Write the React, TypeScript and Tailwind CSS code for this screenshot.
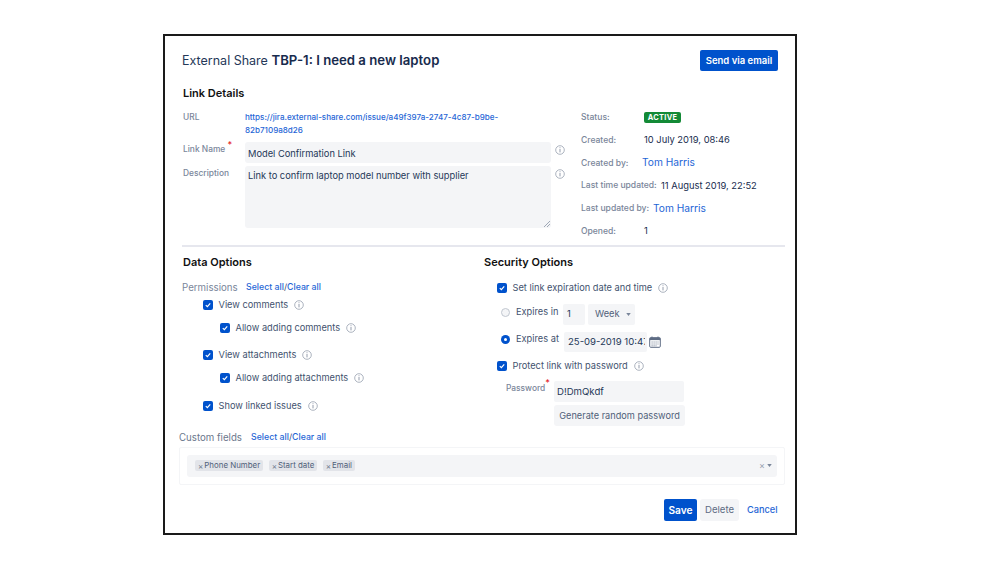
import React from "react";

function Info({ className = "" }: { className?: string }) {
  return (
    <svg viewBox="0 0 10 10" className={`w-[10px] h-[10px] shrink-0 ${className}`} fill="none">
      <circle cx="5" cy="5" r="4.3" stroke="#97a0af" strokeWidth="0.8" />
      <rect x="4.6" y="2.3" width="0.8" height="0.9" fill="#7a869a" />
      <rect x="4.6" y="4" width="0.8" height="3.4" fill="#7a869a" />
    </svg>
  );
}

function Check({ className = "" }: { className?: string }) {
  return (
    <span className={`w-[10px] h-[10px] shrink-0 rounded-[2px] bg-[#0052cc] flex items-center justify-center ${className}`}>
      <svg viewBox="0 0 10 10" className="w-[8px] h-[8px]" fill="none">
        <path d="M2.2 5.2 L4.2 7 L7.8 3" stroke="#fff" strokeWidth="1.5" />
      </svg>
    </span>
  );
}

function Row({ label, margin, indent }: { label: string; margin: string; indent: string }) {
  return (
    <div className={`flex items-center h-4 ${margin} ${indent}`}>
      <Check />
      <span className="ml-[5.5px] pt-[1px] text-[9.25px] text-[#42526e]">{label}</span>
      <Info className="ml-[6px]" />
    </div>
  );
}

function Links() {
  return (
    <span className="text-[8.75px] font-medium text-[#1f66d6]">
      Select all<span className="text-[#42526e] font-normal">/</span>Clear all
    </span>
  );
}

function Tag({ label }: { label: string }) {
  return (
    <span className="h-[11px] pl-[3px] pr-[3px] flex items-center gap-[1px] rounded-[2px] bg-[#e2e4e9] text-[7.9px] text-[#505f79]">
      <span className="text-[8px] text-[#6b778c]">×</span>
      {label}
    </span>
  );
}

function Meta({ label, labelClass, children }: { label: string; labelClass: string; children: React.ReactNode }) {
  return (
    <div className="h-[22.8px] flex items-center">
      <span className={`text-[8.55px] font-medium text-[#7a869a] shrink-0 ${labelClass}`}>{label}</span>
      {children}
    </div>
  );
}

export default function App() {
  return (
    <div className="w-[999px] h-[574px] bg-white pt-[34px] pl-[163px] font-['Inter',sans-serif] overflow-hidden">
      <div className="w-[634px] h-[501px] border-2 border-[#1a1a1a] px-[17px]">
        <div className="flex justify-between items-center pt-[14px]">
          <h1 className="text-[12.5px] text-[#253858]">
            External Share <span className="text-[13.2px] font-semibold text-[#172b4d]">TBP-1: I need a new laptop</span>
          </h1>
          <button className="w-[78px] h-[21px] rounded-[2px] bg-[#0052cc] pt-[1px] text-white text-[9.5px] font-semibold">Send via email</button>
        </div>

        <h2 className="mt-[14px] h-4 leading-4 pl-[1px] text-[11px] font-semibold text-[#111]">Link Details</h2>

        <div className="mt-[5px] flex">
          <div className="w-[399px] pt-[5px] shrink-0">
            <div className="flex">
              <span className="w-[63px] pl-[1px] text-[8.4px] font-medium leading-[13px] text-[#7a869a]">URL</span>
              <a className="w-[262px] whitespace-nowrap text-[8.05px] leading-[13px] font-medium text-[#1f66d6]">
                https://jira.external-share.com/issue/a49f397a-2747-4c87-b9be-<br />82b7109a8d26
              </a>
            </div>
            <div className="flex mt-[5px]">
              <span className="w-[63px] pl-[1px] text-[8.4px] font-medium text-[#7a869a] pt-[1px]">
                Link Name <sup className="text-[#e5262a] text-[9px]">*</sup>
              </span>
              <div className="w-[306px] h-[21px] rounded-[3px] bg-[#f4f5f7] px-[3px] pt-[2px] flex items-center text-[9.3px] text-[#253858]">
                Model Confirmation Link
              </div>
              <Info className="ml-[4px] mt-[3px]" />
            </div>
            <div className="flex mt-[3px]">
              <span className="w-[63px] pl-[1px] text-[8.4px] font-medium text-[#7a869a] pt-[1px]">Description</span>
              <div className="relative w-[306px] h-[62px] rounded-[3px] bg-[#f4f5f7] px-[3px] pt-[3px] text-[9.3px] text-[#253858]">
                Link to confirm laptop model number with supplier
                <svg viewBox="0 0 8 8" className="absolute right-0 bottom-0 w-2 h-2">
                  <path d="M1 7 L7 1 M4 7 L7 4" stroke="#7a869a" strokeWidth="0.7" />
                </svg>
              </div>
              <Info className="ml-[4px] mt-[3px]" />
            </div>
          </div>

          <div className="text-[9.35px] text-[#172b4d]">
            <Meta label="Status:" labelClass="w-[63px]">
              <span className="h-[11px] w-[37px] rounded-[2px] bg-[#138a36] text-white text-[7.4px] font-bold tracking-[0.3px] flex items-center justify-center">ACTIVE</span>
            </Meta>
            <Meta label="Created:" labelClass="w-[63px]">10 July 2019, 08:46</Meta>
            <Meta label="Created by:" labelClass="w-[61px]">
              <span className="text-[10.2px] text-[#1f66d6]">Tom Harris</span>
            </Meta>
            <Meta label="Last time updated:" labelClass="w-[80px]">11 August 2019, 22:52</Meta>
            <Meta label="Last updated by:" labelClass="w-[72px]">
              <span className="text-[10.2px] text-[#1f66d6]">Tom Harris</span>
            </Meta>
            <Meta label="Opened:" labelClass="w-[63px]">1</Meta>
          </div>
        </div>

        <div className="mt-[2px] h-[2px] bg-[#e6e7ee] -mr-[7px]" />

        <div className="flex">
          <div className="w-[302px] shrink-0">
            <h2 className="mt-[7px] h-4 leading-4 pl-[1px] text-[11px] font-semibold text-[#111]">Data Options</h2>
            <div className="mt-[11px] h-[14px] flex items-center">
              <span className="w-[64px] text-[9.7px] text-[#7a869a]">Permissions</span>
              <Links />
            </div>
            <Row label="View comments" margin="mt-[2px]" indent="ml-[21px]" />
            <Row label="Allow adding comments" margin="mt-[7px]" indent="ml-[38px]" />
            <Row label="View attachments" margin="mt-[11px]" indent="ml-[21px]" />
            <Row label="Allow adding attachments" margin="mt-[7px]" indent="ml-[38px]" />
            <Row label="Show linked issues" margin="mt-[12px]" indent="ml-[21px]" />
          </div>

          <div className="flex-1">
            <h2 className="mt-[7px] h-4 leading-4 text-[11px] font-semibold text-[#111]">Security Options</h2>
            <Row label="Set link expiration date and time" margin="mt-[10px]" indent="ml-[13px]" />

            <div className="mt-[8px] flex h-[21px] ml-[17px] text-[9.25px] text-[#42526e]">
              <span className="mt-[4px] w-[9px] h-[9px] rounded-full border border-[#c1c7d0] bg-[#f4f5f7]" />
              <span className="ml-[6px] w-[47px] mt-[1px]">Expires in</span>
              <div className="w-[22px] h-[21px] rounded-[2px] bg-[#f4f5f7] px-[4px] flex items-center text-[#253858]">1</div>
              <div className="ml-[3px] w-[47px] h-[21px] rounded-[2px] bg-[#f4f5f7] flex items-center pl-[7px] gap-[6px] text-[#505f79]">
                Week
                <svg viewBox="0 0 6 4" className="w-[5px] h-[3px]"><path d="M0 0 H6 L3 4 Z" fill="#7a869a" /></svg>
              </div>
            </div>

            <div className="mt-[7px] flex h-[20px] ml-[17px] text-[9.25px] text-[#42526e]">
              <span className="mt-[3px] w-[9px] h-[9px] rounded-full bg-[#0052cc] flex items-center justify-center">
                <span className="w-[3px] h-[3px] rounded-full bg-white" />
              </span>
              <span className="ml-[6px] w-[48px]">Expires at</span>
              <input
                readOnly
                value="25-09-2019 10:47"
                className="w-[83px] h-[20px] rounded-[2px] bg-[#f4f5f7] pl-[4px] pr-[2px] text-[9.55px] text-[#253858] outline-none"
              />
              <svg viewBox="0 0 12 12" className="ml-[2px] mt-[4px] w-3 h-3" fill="none">
                <rect x="0.7" y="1.7" width="10.6" height="9.6" rx="1" stroke="#5e6c84" />
                <rect x="0.7" y="1.7" width="10.6" height="2.4" fill="#5e6c84" />
                <path d="M3 0.5 V2.5 M9 0.5 V2.5" stroke="#5e6c84" />
                <path d="M2.5 6 H9.5 M2.5 8 H9.5 M2.5 9.8 H7.5" stroke="#7a869a" strokeWidth="0.9" strokeDasharray="1.2 0.8" />
              </svg>
            </div>

            <Row label="Protect link with password" margin="mt-[6px]" indent="ml-[13px]" />

            <div className="mt-[7px] flex ml-[22px]">
              <span className="w-[48px] text-[8.4px] font-medium text-[#7a869a] pt-[1px]">
                Password<sup className="text-[#e5262a] text-[9px]">*</sup>
              </span>
              <div className="w-[130px] h-[21px] rounded-[2px] bg-[#f4f5f7] px-[3px] pt-[2px] flex items-center text-[9.6px] text-[#253858]">D!DmQkdf</div>
            </div>
            <button className="mt-[3px] ml-[70px] block w-[131px] h-[21px] rounded-[3px] bg-[#f4f5f7] pt-[1px] text-[9.2px] text-[#505f79]">
              Generate random password
            </button>
          </div>
        </div>

        <div className="mt-[5px] -ml-[3px] h-[14px] flex items-center">
          <span className="w-[72px] text-[9.7px] text-[#6b778c]">Custom fields</span>
          <Links />
        </div>

        <div className="mt-[2px] -ml-[3px] -mr-[7px] h-[38px] border border-[#f4f5f7] rounded-[2px] px-[7px] py-[7px]">
          <div className="h-[22px] rounded-[3px] bg-[#f4f5f7] pl-[8px] pr-[5px] flex items-center gap-[5.5px]">
            <Tag label="Phone Number" />
            <Tag label="Start date" />
            <Tag label="Email" />
            <span className="ml-auto flex items-center gap-[2px] text-[#97a0af] text-[9px]">
              ×
              <svg viewBox="0 0 6 4" className="w-[5px] h-[3px]"><path d="M0 0 H6 L3 4 Z" fill="#7a869a" /></svg>
            </span>
          </div>
        </div>

        <div className="mt-[14px] flex justify-end items-center">
          <button className="w-[33px] h-[22px] rounded-[2px] bg-[#0052cc] pt-[1px] text-white text-[10.2px] font-semibold">Save</button>
          <button className="ml-[3px] w-[39px] h-[22px] rounded-[3px] bg-[#f4f5f7] pt-[1px] text-[9.6px] text-[#5e6c84]">Delete</button>
          <a className="ml-[8px] mr-[1px] w-[30px] pt-[1px] text-[9.2px] font-medium text-[#1f66d6]">Cancel</a>
        </div>
      </div>
    </div>
  );
}
